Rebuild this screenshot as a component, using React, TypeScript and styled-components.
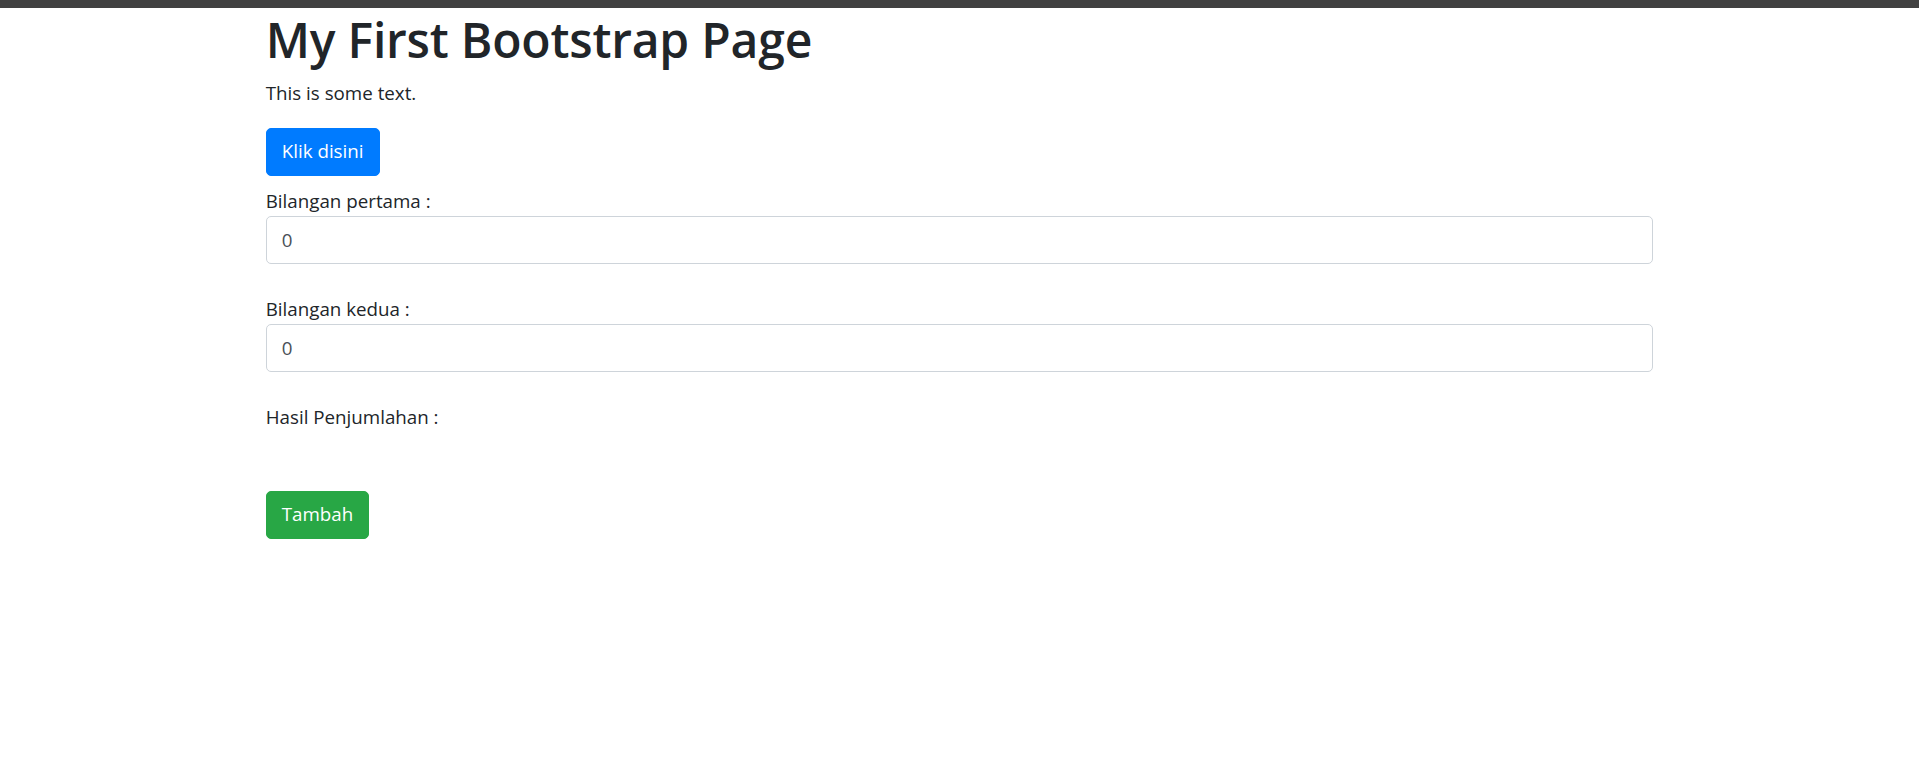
import React from 'react';
import styled, { createGlobalStyle } from 'styled-components';

const GlobalStyle = createGlobalStyle`
  html, body {
    margin: 0;
    padding: 0;
    background: #fff;
  }
  body {
    font-family: "Open Sans", "Noto Sans", "Liberation Sans", sans-serif;
    font-size: 18.75px;
    line-height: 1.5;
    color: #212529;
  }
  * {
    box-sizing: border-box;
  }
`;

const TopBar = styled.div`
  height: 8px;
  background: #414141;
`;

const Container = styled.div`
  max-width: 1425px;
  margin: 0 auto;
  padding: 0 18.75px;
`;

const Heading = styled.h1`
  margin: 2px 0 8px;
  font-size: 48px;
  font-weight: 600;
  line-height: 60px;
  letter-spacing: -0.2px;
`;

const Text = styled.p`
  margin: 0 0 20px;
  line-height: 30px;
`;

const Button = styled.button<{ $variant: 'primary' | 'success' }>`
  display: inline-block;
  height: 47.5px;
  padding: 0 15px;
  border: 1px solid ${p => (p.$variant === 'primary' ? '#007bff' : '#28a745')};
  border-radius: 5px;
  background: ${p => (p.$variant === 'primary' ? '#007bff' : '#28a745')};
  color: #fff;
  font-family: inherit;
  font-size: 18.75px;
  line-height: 1;
  cursor: pointer;
`;

const Form = styled.div`
  display: flex;
  flex-direction: column;
  align-items: flex-start;
  padding-top: 10.5px;
`;

const Label = styled.label`
  display: block;
  line-height: 30px;
`;

const Input = styled.input`
  display: block;
  width: 100%;
  height: 47.5px;
  padding: 0 15px;
  border: 1px solid #ced4da;
  border-radius: 5px;
  font-family: inherit;
  font-size: 18.75px;
  color: #495057;
  background: #fff;
  outline: none;
  margin-bottom: 30.5px;
`;

const Result = styled.div`
  line-height: 30px;
  margin-bottom: 59px;
`;

export default function App() {
  return (
    <>
      <GlobalStyle />
      <TopBar />
      <Container>
        <Heading>My First Bootstrap Page</Heading>
        <Text>This is some text.</Text>
        <Button $variant="primary">Klik disini</Button>
        <Form>
          <Label>Bilangan pertama :</Label>
          <Input type="text" defaultValue="0" />
          <Label>Bilangan kedua :</Label>
          <Input type="text" defaultValue="0" />
          <Result>Hasil Penjumlahan :</Result>
          <Button $variant="success">Tambah</Button>
        </Form>
      </Container>
    </>
  );
}
